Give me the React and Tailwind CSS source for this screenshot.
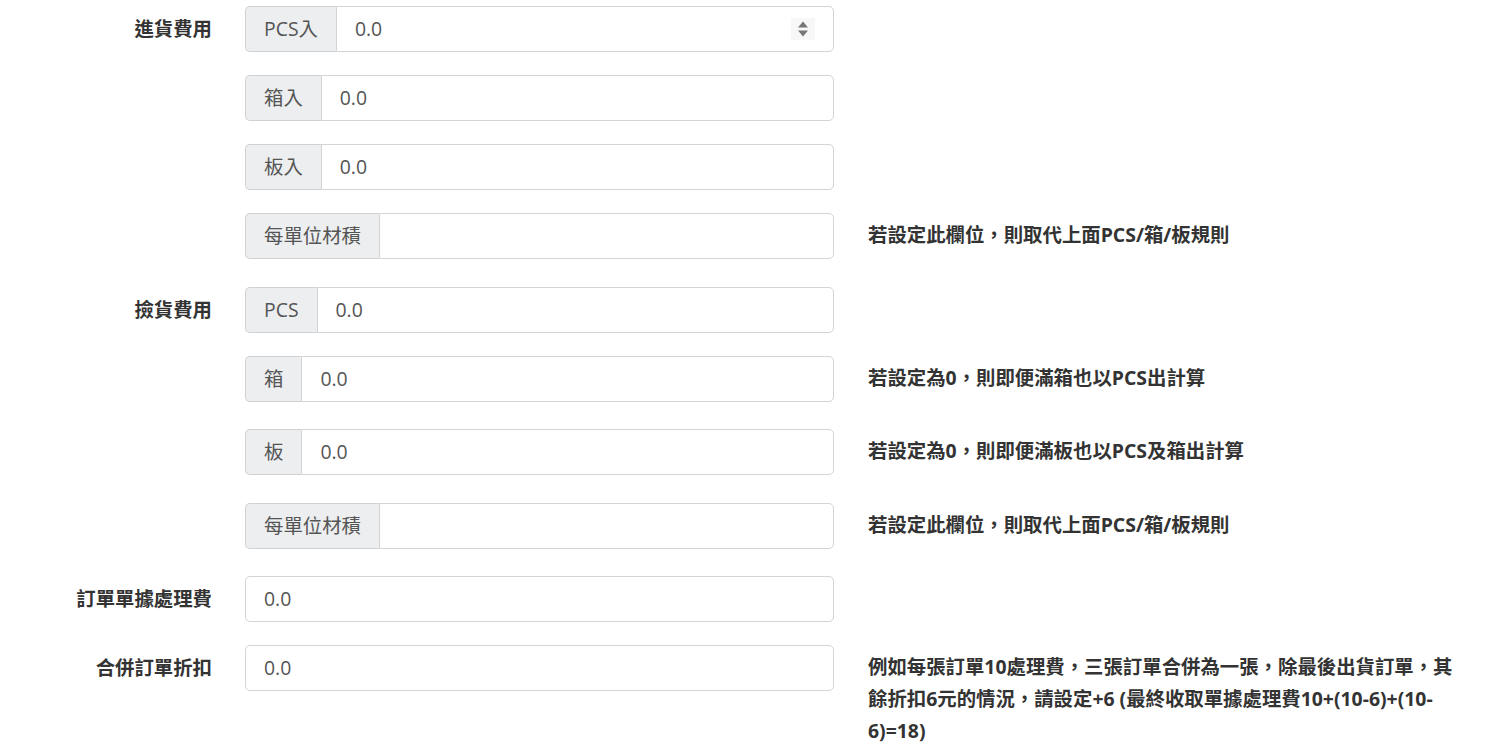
import React from "react";

const font = { fontFamily: '"Open Sans", "Noto Sans CJK TC", sans-serif' };

function Spinner() {
  return (
    <div className="absolute right-[18px] top-[11px] w-[24px] h-[22px] bg-[#f7f7f7] flex items-center justify-center">
      <svg width="12" height="18" viewBox="0 0 12 18">
        <path d="M6 1.5 L11 7.5 L1 7.5 Z" fill="#767676" />
        <path d="M6 16.5 L11 10.5 L1 10.5 Z" fill="#767676" />
      </svg>
    </div>
  );
}

function Field({ addon, value, spinner }) {
  return (
    <div className="flex h-[46px] w-[589px]">
      {addon && (
        <div className="flex items-center px-[18px] bg-[#eceef0] border border-[#cfd2d5] border-r-0 rounded-l-[5px] text-[#555] whitespace-nowrap">
          {addon}
        </div>
      )}
      <div
        className={
          "relative flex-1 flex items-center pl-[18px] border border-[#d2d4d6] text-[#555] bg-white " +
          (addon ? "rounded-r-[5px]" : "rounded-[5px]")
        }
      >
        {value}
        {spinner && <Spinner />}
      </div>
    </div>
  );
}

function Row({ label, addon, value, help, spinner }) {
  return (
    <div className="flex items-start mb-[23px]">
      <div className="w-[212px] shrink-0 h-[46px] flex items-center justify-end font-bold text-[#333]">
        {label}
      </div>
      <div className="ml-[33px] shrink-0">
        <Field addon={addon} value={value} spinner={spinner} />
      </div>
      {help && (
        <div className="ml-[34px] w-[592px] mt-[6px] mb-[12.5px] leading-[32px] font-bold text-[#333]">
          {help}
        </div>
      )}
    </div>
  );
}

export default function App() {
  const rule1 = "若設定此欄位，則取代上面PCS/箱/板規則";
  return (
    <div className="bg-white min-h-[756px] pt-[6px] text-[19.4px]" style={font}>
      <Row label="進貨費用" addon="PCS入" value="0.0" spinner />
      <Row label="" addon="箱入" value="0.0" />
      <Row label="" addon="板入" value="0.0" />
      <Row label="" addon="每單位材積" value="" help={rule1} />
      <Row label="撿貨費用" addon="PCS" value="0.0" />
      <Row label="" addon="箱" value="0.0" help="若設定為0，則即便滿箱也以PCS出計算" />
      <Row label="" addon="板" value="0.0" help="若設定為0，則即便滿板也以PCS及箱出計算" />
      <Row label="" addon="每單位材積" value="" help={rule1} />
      <Row label="訂單單據處理費" value="0.0" />
      <Row
        label="合併訂單折扣"
        value="0.0"
        help="例如每張訂單10處理費，三張訂單合併為一張，除最後出貨訂單，其餘折扣6元的情況，請設定+6 (最終收取單據處理費10+(10-6)+(10-6)=18)"
      />
    </div>
  );
}
